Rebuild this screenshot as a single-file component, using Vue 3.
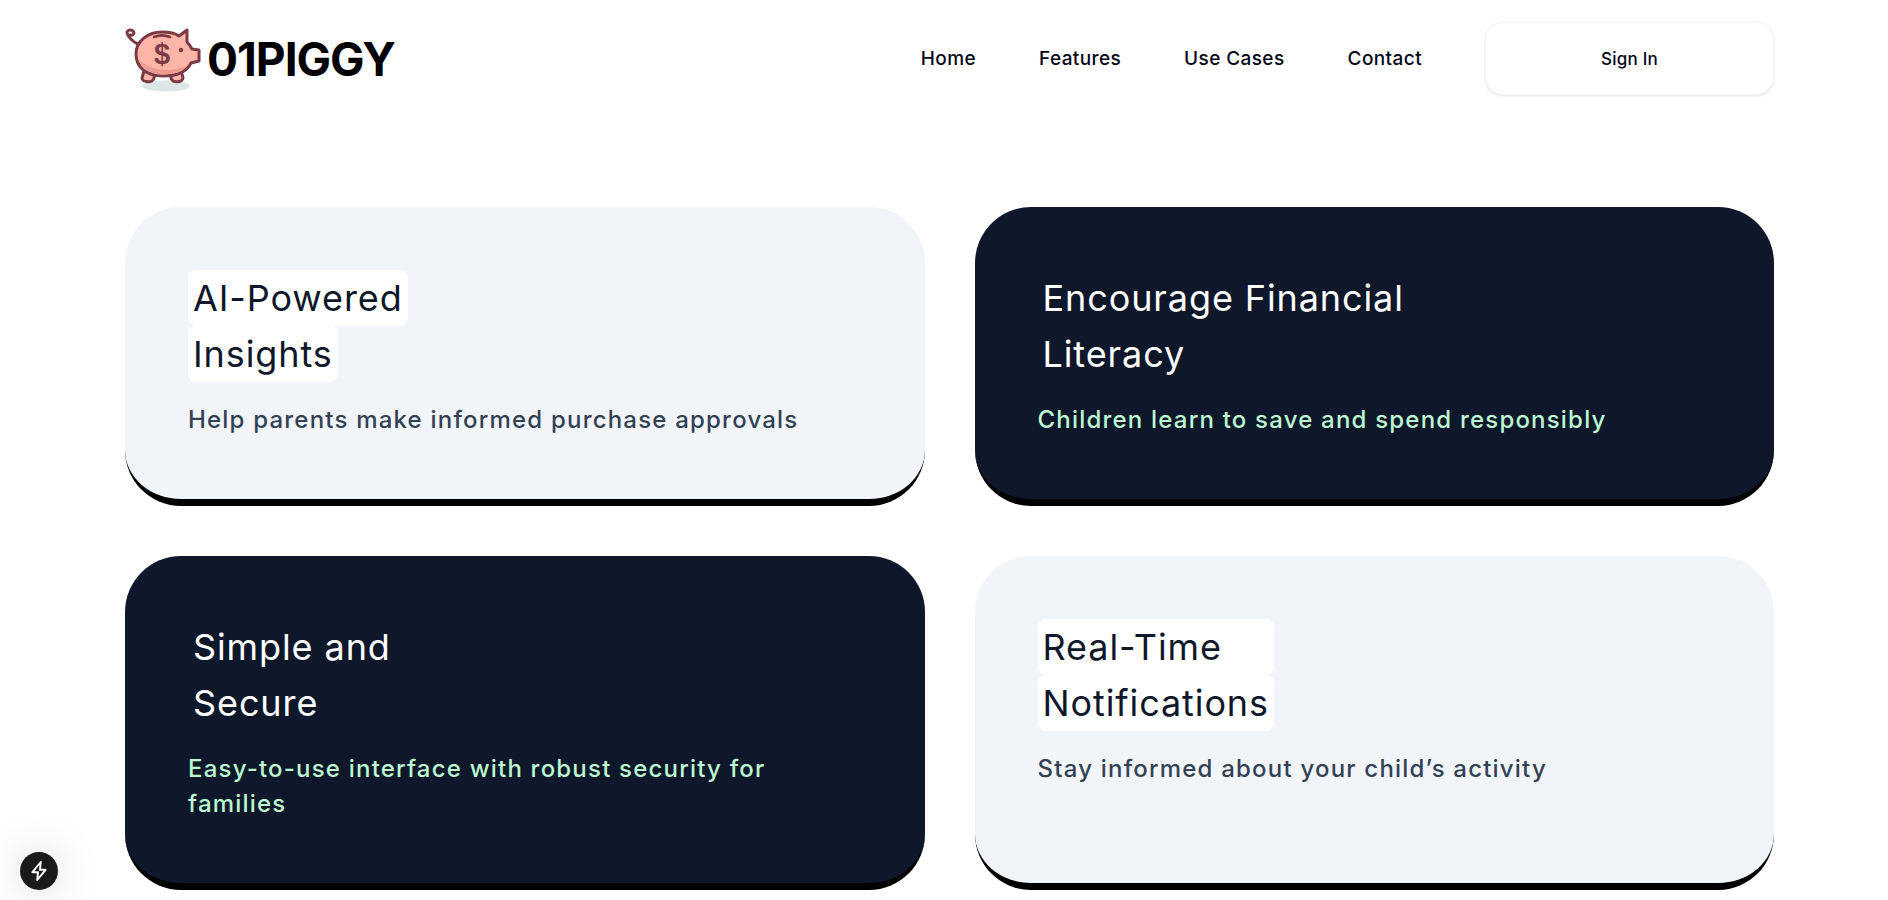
<template>
  <div class="page">
    <header class="top-bar">
      <a class="brand">
        <svg class="pig" viewBox="6 3 78 70">
          <ellipse cx="47" cy="65" rx="24" ry="5.5" fill="#dde6e6" />
          <path d="M19 23 C14 21 9 16 8 12 C8 9 12 8 14 10 C16 12 14 15 11 14" fill="none" stroke="#7a3b45" stroke-width="3" stroke-linecap="round" />
          <path d="M25 50 L23 57 C23 62 34 62 35 57 L36 53 Z" fill="#fdb5a8" stroke="#7a3b45" stroke-width="3" />
          <path d="M52 53 L52 57 C53 62 63 62 64 57 L62 49 Z" fill="#fdb5a8" stroke="#7a3b45" stroke-width="3" />
          <path d="M17 33 C17 20 29 11 43 11 C50 11 56 12 60 15 L68 9 L68 21 C71 24 72 26 73 28 L80 29 L80 40 L72 42 C68 50 58 55 44 55 C27 55 17 46 17 33 Z" fill="#fdb5a8" stroke="#7a3b45" stroke-width="3" stroke-linejoin="round" />
          <path d="M19 38 C28 47 44 51 58 48 C63 47 67 45 70 43 C65 50 57 53.5 44 53.5 C31 53.5 23 47 19 38 Z" fill="#ee9c90" />
          <path d="M35 16 C40 14 46 14 51 16" fill="none" stroke="#7a3b45" stroke-width="2.6" stroke-linecap="round" />
          <circle cx="62" cy="29" r="2.2" fill="#7a3b45" />
          <text x="43" y="43" text-anchor="middle" class="pig-dollar">$</text>
        </svg>
        <span class="brand-name">01PIGGY</span>
      </a>
      <nav class="nav">
        <a v-for="link in links" :key="link" class="nav-link">{{ link }}</a>
      </nav>
      <button class="sign-in">Sign In</button>
    </header>

    <main class="cards">
      <section v-for="card in cards" :key="card.sub" class="card" :class="card.dark ? 'dark' : 'light'">
        <h2 class="title" :class="{ even: card.even }">
          <span v-for="line in card.lines" :key="line" class="line">{{ line }}</span>
        </h2>
        <p class="sub">{{ card.sub }}</p>
      </section>
    </main>

    <div class="dev-badge">
      <svg viewBox="0 0 20 20" class="bolt">
        <path d="M11.5 2.5 L4.5 11 H9.2 L8.5 17.5 L15.5 9 H10.8 Z" fill="none" stroke="#fff" stroke-width="1.6" stroke-linejoin="round" />
      </svg>
    </div>
  </div>
</template>

<script setup>
const links = ['Home', 'Features', 'Use Cases', 'Contact']

const cards = [
  { lines: ['AI-Powered', 'Insights'], sub: 'Help parents make informed purchase approvals', dark: false },
  { lines: ['Encourage Financial', 'Literacy'], sub: 'Children learn to save and spend responsibly', dark: true },
  { lines: ['Simple and', 'Secure'], sub: 'Easy-to-use interface with robust security for families', dark: true },
  { lines: ['Real-Time', 'Notifications'], sub: 'Stay informed about your child’s activity', dark: false, even: true }
]
</script>

<style scoped>
.page {
  font-family: "Inter", "Liberation Sans", sans-serif;
  color: #0f172a;
  background: #fff;
  height: 900px;
  overflow: hidden;
}
.top-bar {
  display: flex;
  align-items: center;
  padding: 0 114px 0 125px;
  height: 117px;
}
.brand {
  display: flex;
  align-items: center;
  gap: 4px;
  margin-right: auto;
}
.pig {
  width: 78px;
  height: 70px;
  display: block;
}
.pig-dollar {
  font-family: "Liberation Sans", sans-serif;
  font-size: 29px;
  font-weight: 700;
  fill: #7a3b45;
}
.brand-name {
  font-size: 46px;
  font-weight: 700;
  color: #000;
  letter-spacing: -1px;
}
.nav {
  display: flex;
  gap: 63px;
  margin-right: 63px;
}
.nav-link {
  font-size: 19px;
  font-weight: 500;
  letter-spacing: 0.4px;
  color: #020617;
}
.sign-in {
  width: 289px;
  height: 73px;
  font-family: inherit;
  font-size: 17px;
  font-weight: 500;
  letter-spacing: 0.2px;
  color: #020617;
  background: #fff;
  border: 1px solid #f3f4f6;
  border-radius: 18px;
  box-shadow: 0 1px 3px rgba(0, 0, 0, 0.1);
}
.cards {
  display: grid;
  grid-template-columns: 1fr 1fr;
  gap: 50px;
  padding: 90px 114px 0 125px;
}
.card {
  padding: 63px 63px 62px;
  border-bottom: 7px solid #000;
  border-radius: 56px;
}
.light {
  background: #f1f5f9;
}
.dark {
  background: #0f172a;
  color: #fff;
}
.title {
  display: inline-grid;
  justify-items: start;
  margin: 0 0 20px;
  font-size: 36px;
  font-weight: 400;
  line-height: 56px;
  letter-spacing: 0.9px;
  vertical-align: top;
}
.title.even {
  justify-items: stretch;
}
.line {
  padding: 0 5px;
  border-radius: 8px;
}
.light .line {
  background: #fff;
}
.sub {
  margin: 0;
  font-size: 24px;
  font-weight: 500;
  line-height: 35px;
  letter-spacing: 1.2px;
  color: #334155;
}
.dark .sub {
  color: #bbf7d0;
}
.dev-badge {
  position: fixed;
  left: 20px;
  bottom: 10px;
  width: 38px;
  height: 38px;
  display: flex;
  align-items: center;
  justify-content: center;
  border-radius: 50%;
  background: #1a1a1a;
  box-shadow: 0 0 40px 10px rgba(0, 0, 0, 0.08);
}
.bolt {
  width: 24px;
  height: 24px;
}
</style>

<style>
body {
  background: #fff;
}
</style>
